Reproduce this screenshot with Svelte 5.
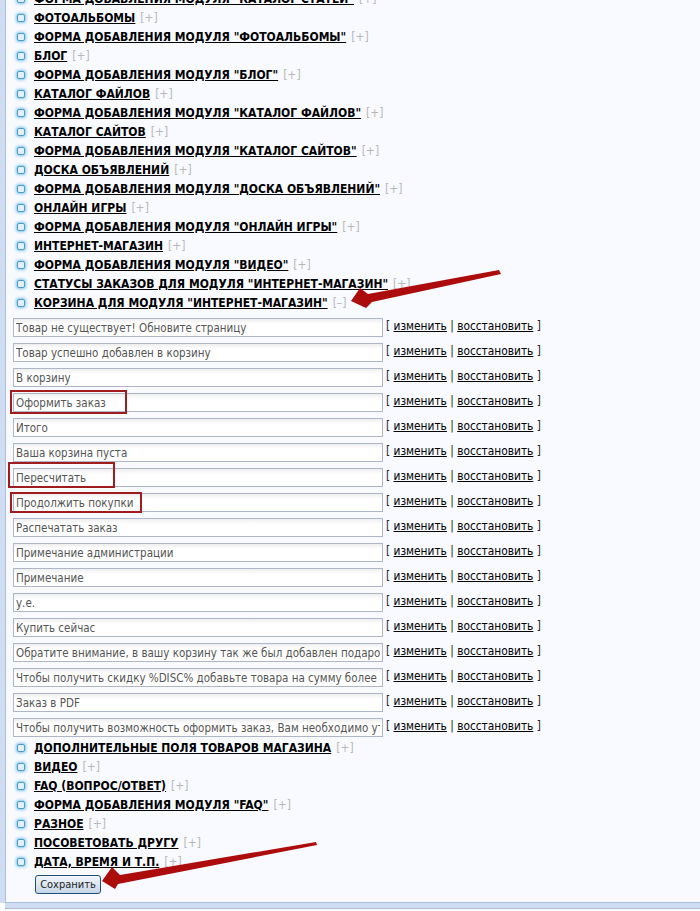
<script>
    const above = [
        'ФОТОАЛЬБОМЫ',
        'ФОРМА ДОБАВЛЕНИЯ МОДУЛЯ "ФОТОАЛЬБОМЫ"',
        'БЛОГ',
        'ФОРМА ДОБАВЛЕНИЯ МОДУЛЯ "БЛОГ"',
        'КАТАЛОГ ФАЙЛОВ',
        'ФОРМА ДОБАВЛЕНИЯ МОДУЛЯ "КАТАЛОГ ФАЙЛОВ"',
        'КАТАЛОГ САЙТОВ',
        'ФОРМА ДОБАВЛЕНИЯ МОДУЛЯ "КАТАЛОГ САЙТОВ"',
        'ДОСКА ОБЪЯВЛЕНИЙ',
        'ФОРМА ДОБАВЛЕНИЯ МОДУЛЯ "ДОСКА ОБЪЯВЛЕНИЙ"',
        'ОНЛАЙН ИГРЫ',
        'ФОРМА ДОБАВЛЕНИЯ МОДУЛЯ "ОНЛАЙН ИГРЫ"',
        'ИНТЕРНЕТ-МАГАЗИН',
        'ФОРМА ДОБАВЛЕНИЯ МОДУЛЯ "ВИДЕО"',
        'СТАТУСЫ ЗАКАЗОВ ДЛЯ МОДУЛЯ "ИНТЕРНЕТ-МАГАЗИН"'
    ];
    const fields = [
        'Товар не существует! Обновите страницу',
        'Товар успешно добавлен в корзину',
        'В корзину',
        'Оформить заказ',
        'Итого',
        'Ваша корзина пуста',
        'Пересчитать',
        'Продолжить покупки',
        'Распечатать заказ',
        'Примечание администрации',
        'Примечание',
        'у.е.',
        'Купить сейчас',
        'Обратите внимание, в вашу корзину так же был добавлен подарок',
        'Чтобы получить скидку %DISC% добавьте товара на сумму более',
        'Заказ в PDF',
        'Чтобы получить возможность оформить заказ, Вам необходимо уточнить'
    ];
    const below = [
        'ДОПОЛНИТЕЛЬНЫЕ ПОЛЯ ТОВАРОВ МАГАЗИНА',
        'ВИДЕО',
        'FAQ (ВОПРОС/ОТВЕТ)',
        'ФОРМА ДОБАВЛЕНИЯ МОДУЛЯ "FAQ"',
        'РАЗНОЕ',
        'ПОСОВЕТОВАТЬ ДРУГУ',
        'ДАТА, ВРЕМЯ И Т.П.'
    ];
</script>

{#snippet row(title, sign)}
    <div class='row'>
        <span class='bullet'></span>
        <a href='#top' class='title'>{title}</a>
        <span class='toggle'>[{sign}]</span>
    </div>
{/snippet}

<div class='page'>
    <div class='frame'>
        <div class='list top'>
            {@render row('ФОРМА ДОБАВЛЕНИЯ МОДУЛЯ "КАТАЛОГ СТАТЕЙ"', '+')}
            {#each above as title}
                {@render row(title, '+')}
            {/each}
            {@render row('КОРЗИНА ДЛЯ МОДУЛЯ "ИНТЕРНЕТ-МАГАЗИН"', '–')}
        </div>
        <div class='fields'>
            {#each fields as value}
                <div class='field'>
                    <input type='text' {value} />
                    <span class='actions'>[ <a href='#top'>изменить</a> | <a href='#top'>восстановить</a> ]</span>
                </div>
            {/each}
        </div>
        <div class='list'>
            {#each below as title}
                {@render row(title, '+')}
            {/each}
        </div>
        <button class='save'>Сохранить</button>
    </div>

    <!-- annotations drawn over the screenshot -->
    <span class='mark' style='left:10px;top:390px;width:117px;height:24px'></span>
    <span class='mark' style='left:8px;top:462px;width:107px;height:26px'></span>
    <span class='mark' style='left:10px;top:492px;width:132px;height:21px'></span>
    <svg class='arrows' width='700' height='911' viewBox='0 0 700 911'>
        <path d='M499 270 L501 274 L372 302 L366 308 L351 301 L360 288 L368 294 Z' fill='#ad0c0c' />
        <path d='M316 842 L317 845 L118 884 L115 889 L102 881 L112 867 L120 875 Z' fill='#ad0c0c' />
    </svg>
</div>

<style>
    :global(body){
        background: #fff;
    }
    .page{
        position: relative;
        width: 700px;
        height: 911px;
        overflow: hidden;
        font-family: "DejaVu Sans Condensed", "DejaVu Sans", sans-serif;
        font-stretch: condensed;
    }
    .frame{
        box-sizing: border-box;
        display: flow-root;
        height: 903px;
        margin-left: 5px;
        padding: 0 0 0 11px;
        background: #f8faff;
        border-left: 1px solid #a9c0e0;
        border-bottom: 1px solid #a9c0e0;
        box-shadow: -5px 0 0 #cfdcf2, 0 5px 0 #cfdcf2, 0 6px 0 #a9b9d6;
    }
    .list.top{
        margin-top: -11px;
    }
    .row{
        display: flex;
        align-items: center;
        height: 19px;
        font-size: 12px;
    }
    .bullet{
        box-sizing: border-box;
        width: 8px;
        height: 8px;
        margin-right: 9px;
        background: #e2f2fc;
        border: 1px solid #4d9bc9;
        border-radius: 2px;
        box-shadow: 0 0 3px 1px #7cc4f2;
    }
    .title{
        color: #000;
        font-weight: bold;
    }
    .toggle{
        margin-left: 5px;
        color: #b8b8b8;
    }
    .fields{
        margin: 6px 0 0 -4px;
    }
    .field{
        display: flex;
        height: 25px;
        align-items: flex-start;
    }
    .fields + .list{
        margin-top: -5px;
    }
    input{
        box-sizing: border-box;
        width: 370px;
        height: 19px;
        padding: 1px 2px;
        font-family: inherit;
        font-stretch: condensed;
        font-size: 11.5px;
        color: #555;
        background: linear-gradient(#eeeeee, #fff 5px);
        border: 1px solid #aeb6c8;
    }
    .actions{
        margin: 1px 0 0 3px;
        font-size: 11.8px;
        color: #222;
    }
    .actions a{
        color: #000;
    }
    .save{
        box-sizing: border-box;
        display: block;
        width: 66px;
        height: 19px;
        margin: 4px 0 0 18px;
        padding: 0;
        font-family: inherit;
        font-stretch: condensed;
        font-size: 11px;
        color: #222;
        background: linear-gradient(#f2f6fb, #c6d6e6);
        border: 1px solid #1f4e79;
        border-radius: 3px;
    }
    .mark{
        position: absolute;
        box-sizing: border-box;
        border: 2px solid #a11c1c;
    }
    .arrows{
        position: absolute;
        left: 0;
        top: 0;
    }
</style>
